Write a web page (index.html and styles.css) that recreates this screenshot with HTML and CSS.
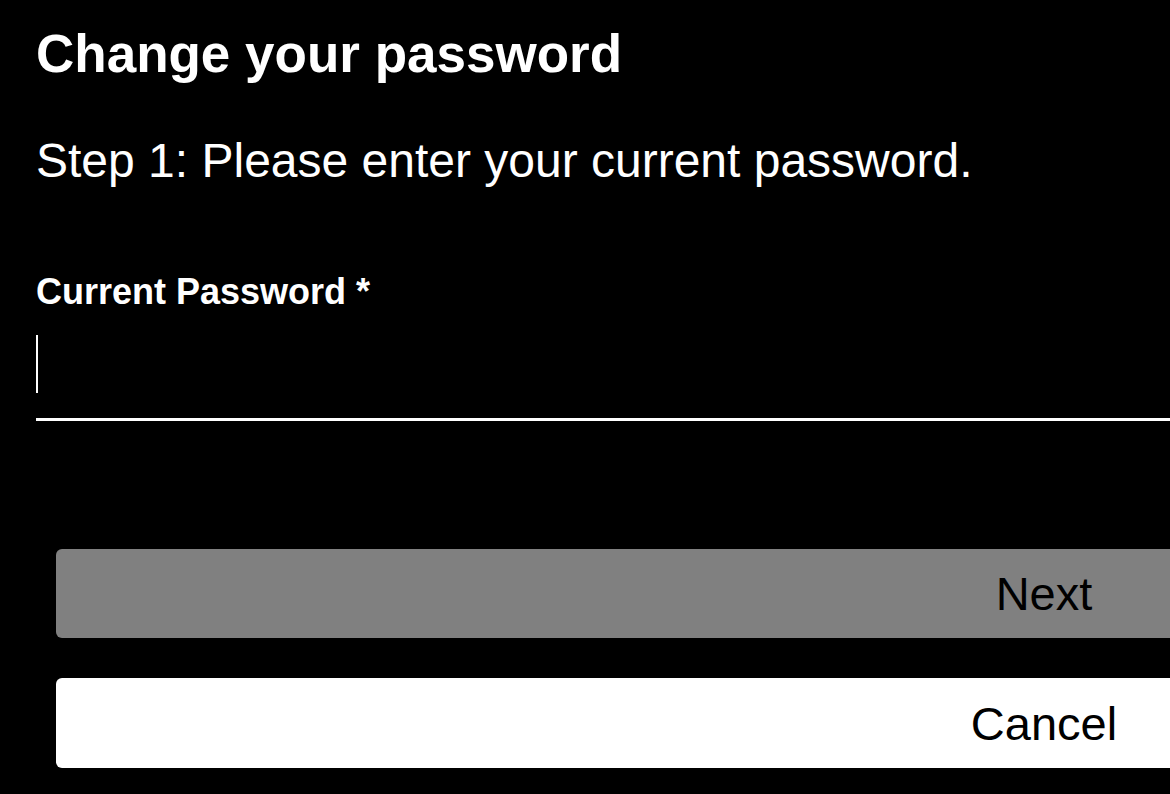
FILE: index.html
```html
<!DOCTYPE html>
<html lang="en">
<head>
<meta charset="utf-8">
<title>Change your password</title>
<link rel="stylesheet" href="styles.css">
</head>
<body>
<main class="page">
  <h1 class="title">Change your password</h1>
  <p class="step">Step 1: Please enter your current password.</p>
  <form class="form">
    <label class="label" for="current">Current Password *</label>
    <div class="field" id="current"><span class="caret"></span></div>
    <div class="actions">
      <button type="button" class="btn btn-next">Next</button>
      <button type="button" class="btn btn-cancel">Cancel</button>
    </div>
  </form>
</main>
</body>
</html>
```
FILE: styles.css
```css
html {
  overflow: hidden;
  background: #000;
}
body {
  margin: 0;
  background: #000;
  color: #fff;
  font-family: "Liberation Sans", Arial, sans-serif;
}
.page {
  width: 2088px;
  box-sizing: border-box;
  padding: 22px 36px 0;
}
.title {
  margin: 0;
  font-size: 53px;
  line-height: 1.2;
  font-weight: 700;
}
.step {
  margin: 46px 0 0;
  font-size: 48px;
  line-height: 1.2;
  font-weight: 400;
}
.form {
  display: flex;
  flex-direction: column;
  margin-top: 81px;
}
.label {
  font-size: 36px;
  line-height: 1.2;
  font-weight: 700;
}
.field {
  display: flex;
  padding: 22px 0 25px;
  border-bottom: 3px solid #fff;
}
.caret {
  width: 2px;
  height: 58px;
  background: #fff;
}
.actions {
  display: flex;
  flex-direction: column;
  gap: 40px;
  margin: 128px 20px 0;
}
.btn {
  border: none;
  border-radius: 6px;
  height: 89px;
  font-family: "Liberation Sans", Arial, sans-serif;
  font-size: 47px;
  color: #000;
  padding: 0;
}
.btn-next {
  background: #808080;
}
.btn-cancel {
  background: #fff;
  height: 90px;
}
```
